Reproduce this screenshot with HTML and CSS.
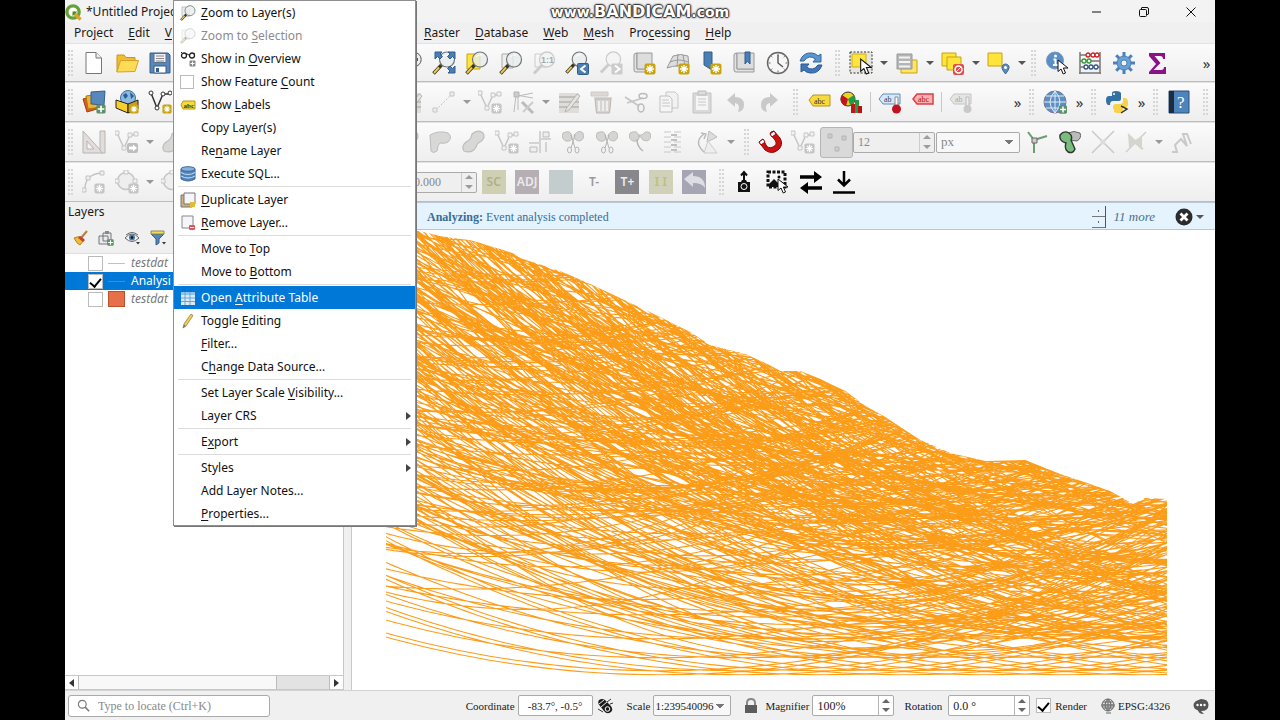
FILE: index.html
```html
<!DOCTYPE html>
<html lang="en">
<head>
<meta charset="utf-8">
<title>*Untitled Project — QGIS</title>
<link rel="stylesheet" href="styles.css">
</head>
<body>
<svg class="defs" aria-hidden="true">
  <defs>
    <symbol id="star" viewBox="0 0 12 12"><rect x=".5" y=".5" width="11" height="11" rx="2" fill="#c9a40c"/><path d="M6 2v8M2 6h8M3.2 3.2l5.6 5.6M8.8 3.2L3.2 8.8" stroke="#fff" stroke-width="1.3"/></symbol>
    <symbol id="gstar" viewBox="0 0 12 12"><rect x=".5" y=".5" width="11" height="11" rx="2" fill="#c4c4c4"/><path d="M6 2v8M2 6h8M3.2 3.2l5.6 5.6M8.8 3.2L3.2 8.8" stroke="#fff" stroke-width="1.3"/></symbol>
    <symbol id="plus" viewBox="0 0 12 12"><rect x=".5" y=".5" width="11" height="11" rx="2" fill="#5b9068"/><path d="M6 2v8M2 6h8" stroke="#fff" stroke-width="2"/></symbol>
    <symbol id="lens" viewBox="0 0 24 24"><path d="M1.500 22.500l8-8.500" stroke="#3d3520" stroke-width="3.500"/><path d="M2 22l5-5.500" stroke="#e5c95a" stroke-width="2"/><circle cx="15" cy="8.500" r="7.500" fill="#e7eced" fill-opacity=".8" stroke="#6f7678" stroke-width="1.200"/><path d="M11 6q2-3 6-2" stroke="#fff" fill="none"/></symbol>
    <symbol id="glens" viewBox="0 0 24 24"><path d="M2 22.500l8-8.500" stroke="#ccc" stroke-width="3"/><circle cx="15" cy="8.500" r="7.500" fill="#f4f4f4" stroke="#ccc" stroke-width="1.300"/></symbol>
    <symbol id="cursor" viewBox="0 0 12 16"><path d="M1 1v11.500l3-2.500 2.200 5 2.300-1L6.400 9H11z" fill="#fff" stroke="#111"/></symbol>

    <symbol id="new" viewBox="0 0 24 24"><path d="M4 1.500h10l5.500 5.500v15.500H4z" fill="#fff" stroke="#777"/><path d="M14 1.500v5.500h5.500" fill="#eee" stroke="#777"/></symbol>
    <symbol id="open" viewBox="0 0 24 24"><path d="M2 21V4h7l2 2.500h9V10" fill="#efbd2e" stroke="#c9951a"/><path d="M2 21l3.500-11.500h18L20 20.500z" fill="#ffda57" stroke="#d5a12b"/></symbol>
    <symbol id="save" viewBox="0 0 24 24"><path d="M2 2h18l2 2v18H2z" fill="#5b86b8" stroke="#345d8e"/><path d="M6 2.500h12v9H6z" fill="#f2f2f2" stroke="#58708c"/><path d="M8 5h8M8 7.500h8M8 10h8" stroke="#888"/><path d="M6 15h12v7H6z" fill="#fff" stroke="#345d8e"/><path d="M8 17h3v4H8z" fill="#345d8e"/></symbol>
    <symbol id="zout" viewBox="0 0 24 24"><circle cx="15" cy="8.500" r="7.200" fill="#eee" stroke="#555"/><path d="M11 8.500h8" stroke="#345d8e" stroke-width="3"/></symbol>
    <symbol id="zfull" viewBox="0 0 24 24"><use href="#lens" width="24" height="24"/><path d="M3 1h7l-2 2 2.500 2.500-2.500 2.500L5.500 5.500 3 8zM16 1h7v7l-2.500-2.500L18 8l-2.500-2.500L18 3zM23 22h-7l2-2-2.500-2.500L18 15l2.500 2.500L23 15z" fill="#4a7fb5" stroke="#315c89"/></symbol>
    <symbol id="zsel" viewBox="0 0 24 24"><path d="M2 3h13v15H2z" fill="#ffe43b" stroke="#c9a40c"/><use href="#lens" width="24" height="24"/></symbol>
    <symbol id="zlayer" viewBox="0 0 24 24"><path d="M3 3h11v14H3z" fill="#eee" stroke="#aaa"/><use href="#lens" width="24" height="24"/></symbol>
    <symbol id="zone" viewBox="0 0 24 24"><path d="M3 3h11v13H3z" fill="none" stroke="#ccc"/><use href="#glens" width="24" height="24"/><text x="9" y="12" font-size="9" font-weight="bold" fill="#aaa" font-family="Liberation Sans">1:1</text></symbol>
    <symbol id="zlast" viewBox="0 0 24 24"><use href="#lens" width="23" height="23"/><rect x="12.500" y="12.500" width="11" height="11" rx="1" fill="#4a7fb5" stroke="#315c89"/><path d="M20.500 14.500l-4.500 3.500 4.500 3.500" fill="none" stroke="#fff" stroke-width="2"/></symbol>
    <symbol id="znext" viewBox="0 0 24 24"><use href="#glens" width="23" height="23"/><rect x="12.500" y="12.500" width="11" height="11" rx="1" fill="#ccc"/><path d="M16 14.500l4.500 3.500-4.500 3.500" fill="none" stroke="#fff" stroke-width="2"/></symbol>
    <symbol id="newmap" viewBox="0 0 24 24"><path d="M2 4q0-2 3-2v16h16v3H4q-2 0-2-2z" fill="#e2e2e2" stroke="#999"/><path d="M5 2h15v16H5z" fill="#ddd" stroke="#999"/><use href="#star" x="12" y="12" width="12" height="12"/></symbol>
    <symbol id="map3d" viewBox="0 0 24 24"><path d="M1 17l6-12q8-3 15 0l1 11q-11-3-22 1z" fill="#ddd" stroke="#999"/><path d="M4 11q9-4 18 0M12 3l-1 13M17 4l2 12" stroke="#999" fill="none"/><use href="#star" x="12" y="12" width="12" height="12"/></symbol>
    <symbol id="mark" viewBox="0 0 24 24"><path d="M5 1h8v18l-8-5z" fill="#4a7fb5" stroke="#315c89"/><use href="#star" x="11" y="12" width="12" height="12"/></symbol>
    <symbol id="marks" viewBox="0 0 24 24"><path d="M2 4q0-2 3-2v16h17v3H4q-2 0-2-2z" fill="#e2e2e2" stroke="#999"/><path d="M5 2h17v16H5z" fill="#ddd" stroke="#999"/><path d="M13 1h5v12l-2.500-3L13 13z" fill="#4a7fb5" stroke="#315c89"/></symbol>
    <symbol id="clock" viewBox="0 0 24 24"><circle cx="12" cy="12" r="10.500" fill="#f6f6f6" stroke="#666" stroke-width="1.400"/><path d="M12 4v8l5 4" fill="none" stroke="#555" stroke-width="1.400"/><path d="M12 2.500v2M12 19.500v2M2.500 12h2M19.500 12h2M5.300 5.300l1 1M18.700 5.300l-1 1M5.300 18.700l1-1M18.700 18.700l-1-1" stroke="#666"/></symbol>
    <symbol id="refresh" viewBox="0 0 24 24"><path d="M1 10Q4 1 13 2q4 .5 6 3l3-2v8h-8l2.500-3Q10 3 5 10z" fill="#5b96d2" stroke="#3267a2"/><path d="M23 14q-3 9-12 8-4-.5-6-3l-3 2v-8h8l-2.500 3Q14 21 19 14z" fill="#3e78bb" stroke="#2a5a93"/></symbol>
    <symbol id="select" viewBox="0 0 24 24"><path d="M1 1h22v21H1z" fill="#e6e6e0" stroke="#333" stroke-dasharray="2 1.500"/><path d="M3 3h14v13H3z" fill="#ffe43b" stroke="#cdb01e"/><use href="#cursor" x="10" y="7" width="14" height="17"/></symbol>
    <symbol id="selform" viewBox="0 0 24 24"><path d="M6 9h16v13H6z" fill="#ffe566" stroke="#c9a40c"/><path d="M2 3h15v15H2z" fill="#b5b5b5" stroke="#999"/><path d="M4 5.500h11v2H4zM4 10h11v2H4zM4 14.500h11v2H4z" fill="#f4f4f4"/></symbol>
    <symbol id="desel" viewBox="0 0 24 24"><path d="M1 2h14v13H1z" fill="#ffe43b" stroke="#c9a40c"/><path d="M6 6h14v13H6z" fill="#ffe43b" stroke="#c9a40c"/><rect x="12" y="13" width="11" height="11" rx="2" fill="#dd4d4d"/><circle cx="17.500" cy="18.500" r="3.500" fill="none" stroke="#fff" stroke-width="1.500"/><path d="M15 21l5-5" stroke="#fff"/></symbol>
    <symbol id="selloc" viewBox="0 0 24 24"><path d="M1 2h14v13H1z" fill="#ffe43b" stroke="#c9a40c"/><path d="M18.500 23q-6-7-2-9.500 2-1 4 0 4 2.500-2 9.500z" fill="#5b8ac0" stroke="#416b9b"/><circle cx="18.500" cy="16.500" r="1.500" fill="#fff"/></symbol>
    <symbol id="ident" viewBox="0 0 24 24"><circle cx="10" cy="9.500" r="8.500" fill="#5b8ec6" stroke="#7897b9"/><path d="M10.500 8v6M8.500 8.500h2M8 14h5" stroke="#fff" stroke-width="2"/><circle cx="10.500" cy="5" r="1.500" fill="#fff"/><use href="#cursor" x="11" y="8" width="14" height="16"/></symbol>
    <symbol id="abacus" viewBox="0 0 24 24"><path d="M2 1v22M22 1v22M1 22h22M2 4h20M2 10h20M2 16h20" stroke="#777" stroke-width="1.500"/><g fill="#fff" stroke-width="1.300"><g stroke="#c22"><circle cx="10" cy="4" r="2"/><circle cx="15" cy="4" r="2"/><circle cx="19" cy="4" r="2"/></g><g stroke="#393"><circle cx="6" cy="10" r="2"/><circle cx="11" cy="10" r="2"/></g><g stroke="#358"><circle cx="8" cy="16" r="2"/><circle cx="13" cy="16" r="2"/><circle cx="18" cy="16" r="2"/></g></g></symbol>
    <symbol id="gear" viewBox="0 0 24 24"><path d="M12 1v22M1 12h22M4.200 4.200l15.600 15.600M19.800 4.200L4.200 19.800" stroke="#4b80b8" stroke-width="3"/><circle cx="12" cy="12" r="7" fill="#69a0d6" stroke="#4b80b8"/><circle cx="12" cy="12" r="3" fill="#f4f4f4" stroke="#4b80b8"/></symbol>
    <symbol id="sigma" viewBox="0 0 24 24"><path d="M4 2h16v6h-2q0-3-3-3H9.500l6 7-7 7H16q3 0 3-3h2v7H4v-2l7-8-7-8z" fill="#8b1186"/></symbol>

    <symbol id="dsm" viewBox="0 0 24 24"><path d="M1 9l13-4 4 13-13 4z" fill="#dd5b23" stroke="#a43c11"/><path d="M4 6l13-2 2 13-13 2z" fill="#efb32e" stroke="#a97a12"/><path d="M9 2l14-1-1 14-13-1z" fill="#5687bd" stroke="#365f8e"/><use href="#plus" x="14" y="14" width="10" height="10"/></symbol>
    <symbol id="gpkg" viewBox="0 0 24 24"><circle cx="13" cy="8" r="7.500" fill="#8bbbe0" stroke="#456f96"/><path d="M8 5l3-2 2 3-3 3zM15 2l4 4-3 3z" fill="#2d5c8f"/><path d="M1 10l12 4v9L1 18z" fill="#f7cf2c" stroke="#222"/><path d="M13 14l10-4v9l-10 4z" fill="#c99f16" stroke="#222"/><use href="#star" x="14" y="14" width="10" height="10"/></symbol>
    <symbol id="vee" viewBox="0 0 24 24"><path d="M3 3l6 15 6-14h7" stroke="#333" stroke-width="1.500" fill="none"/><g fill="#fff" stroke="#333"><circle cx="3" cy="3" r="2"/><circle cx="9" cy="18" r="2"/><circle cx="15" cy="4" r="2"/><circle cx="22" cy="3" r="2"/></g><use href="#star" x="14" y="14" width="10" height="10"/></symbol>
    <symbol id="gvee" viewBox="0 0 24 24"><path d="M2 3l7 15 6-13h7" stroke="#c6c6c6" fill="none" stroke-width="1.500"/><g fill="#f2f2f2" stroke="#c6c6c6"><path d="M0 1h4v4H0zM7 16h4v4H7zM13 3h4v4h-4zM19 2h4v4h-4z"/></g><use href="#gstar" x="13" y="13" width="11" height="11"/></symbol>
    <symbol id="garrow" viewBox="0 0 24 24"><path d="M2 3l7 15 6-13h7" stroke="#c6c6c6" fill="none" stroke-width="1.500"/><g fill="#f2f2f2" stroke="#c6c6c6"><path d="M0 1h4v4H0zM7 16h4v4H7zM13 3h4v4h-4zM19 2h4v4h-4z"/></g><rect x="12" y="13" width="11" height="10" rx="2" fill="#bdbdbd"/><path d="M14 16.500h4v-2l4 3.500-4 3.500v-2h-4z" fill="#fff"/></symbol>
    <symbol id="gline" viewBox="0 0 24 24"><path d="M4 20L20 4" stroke="#c4c4c4" stroke-dasharray="2 1.500"/><path d="M1 18h4v4H1zM18 2h4v4h-4z" fill="#eee" stroke="#c4c4c4"/></symbol>
    <symbol id="gvert" viewBox="0 0 24 24"><path d="M3 22L5 5l17 3M7 20V6l15-3" stroke="#bbb" fill="none"/><path d="M3 2h5v5H3z" fill="#ccc" stroke="#b5b5b5"/><path d="M11 12l11 11" stroke="#bbb" stroke-width="3"/><path d="M22 12L12 22" stroke="#ccc" stroke-width="2"/></symbol>
    <symbol id="gtable" viewBox="0 0 24 24"><path d="M2 3h20v20H2z" fill="#dfdcd9"/><path d="M2 7h20M2 12h20M2 17h20" stroke="#b8b5b2" stroke-width="1.500"/><path d="M9 19L20 4l3 2-11 14-4 2z" fill="#e5e5e2" stroke="#b5b5b5"/></symbol>
    <symbol id="gtrash" viewBox="0 0 24 24"><path d="M1 2h17v4H1z" fill="#ddd8d4" stroke="#ccc"/><path d="M5 9h16l-1.500 14h-13zM4 8h18" fill="#d8d4d1" stroke="#bbb5b0"/><path d="M9 11v10M13 11v10M17 11v10" stroke="#eee" stroke-width="2"/></symbol>
    <symbol id="gcut" viewBox="0 0 24 24"><path d="M1 7l14 9M3 13l16-5" stroke="#c4c4c4" stroke-width="1.500"/><ellipse cx="19" cy="6" rx="4" ry="2.500" fill="none" stroke="#bbb" stroke-width="1.500"/><ellipse cx="17" cy="18" rx="3" ry="4" fill="none" stroke="#bbb" stroke-width="1.500"/></symbol>
    <symbol id="gcopy" viewBox="0 0 24 24"><path d="M9 2h9l3 3v13H9z" fill="#f2f2f2" stroke="#c8c8c8"/><path d="M3 6h9l3 3v13H3z" fill="#f6f6f6" stroke="#c0c0c0"/><path d="M5 10h7M5 13h8M5 16h8" stroke="#c8c8c8"/></symbol>
    <symbol id="gpaste" viewBox="0 0 24 24"><path d="M3 3h18v20H3z" fill="#d9d9dc" stroke="#c4c4c4"/><path d="M6 6h12v14H6z" fill="#f5f5f5"/><path d="M8 1h8v4H8z" fill="#ddd" stroke="#bbb"/><path d="M8 9h8M8 12h8M8 15h8" stroke="#c8c8c8"/></symbol>
    <symbol id="gundo" viewBox="0 0 24 24"><path d="M3 10l8-7v4q9 0 9 8 0 6-6 7 3-8-3-9v4z" fill="#c9c9c9"/></symbol>
    <symbol id="gredo" viewBox="0 0 24 24"><path d="M21 10l-8-7v4q-9 0-9 8 0 6 6 7-3-8 3-9v4z" fill="#c9c9c9"/></symbol>
    <symbol id="lab" viewBox="0 0 24 24"><path d="M2 10l4-5h17v11H6z" fill="#f8da3a" stroke="#b7951c"/><text x="7" y="13.500" font-size="8" fill="#333" font-family="Liberation Serif">abc</text></symbol>
    <symbol id="diag" viewBox="0 0 24 24"><circle cx="8" cy="9" r="7" fill="#e9d325" stroke="#333"/><path d="M8 9L2 5a7 7 0 0 0 4 11z" fill="#c3161c"/><path d="M8 9l6-4a7 7 0 0 1-4 10z" fill="#249c43"/><path d="M11 14h4v9h-4z" fill="#c3161c"/><path d="M15 10h4v13h-4z" fill="#249c43"/><path d="M18 16h4v7h-4z" fill="#b11"/></symbol>
    <symbol id="labpin" viewBox="0 0 24 24"><path d="M1 9l4-5h17v10H5z" fill="#d5e8f8" stroke="#5c8dbc"/><text x="6" y="12" font-size="8" fill="#345" font-family="Liberation Serif">ab</text><path d="M17 7h3v9h-3z" fill="#fff" stroke="#888"/><circle cx="18.500" cy="19" r="4.500" fill="#c1121f"/></symbol>
    <symbol id="labred" viewBox="0 0 24 24"><path d="M2 9l4-5h16v10H6z" fill="#f8b0b0" stroke="#dc3d45" stroke-width="1.500"/><text x="7" y="12" font-size="8" fill="#a11" font-family="Liberation Serif">abc</text></symbol>
    <symbol id="labgray" viewBox="0 0 24 24"><path d="M1 9l4-5h17v10H5z" fill="#e5e5e5" stroke="#c4c4c4"/><text x="6" y="12" font-size="8" fill="#aaa" font-family="Liberation Serif">ab</text><path d="M17 7h3v9h-3z" fill="#eee" stroke="#bbb"/><circle cx="18.500" cy="19" r="4" fill="#c9c9c9"/></symbol>
    <symbol id="globe" viewBox="0 0 24 24"><circle cx="12" cy="12" r="11" fill="#5d8fc4" stroke="#778"/><path d="M1 12h22M12 1v22M3 6h18M3 18h18M12 1Q2 12 12 23M12 1q10 11 0 22" stroke="#e3eefa" fill="none"/><use href="#plus" x="15" y="15" width="10" height="9"/></symbol>
    <symbol id="py" viewBox="0 0 24 24"><path d="M7 6V3q0-2 4-2t5 2v6q0 2-2 2H8q-3 0-3 4H3q-2-1-2-5t3-4z" fill="#3570a5"/><path d="M9 19v2q0 2 4 2t5-2v-3h2q3 0 3-5t-3-5h-2v3q0 3-3 3h-4q-3 0-3 3v2z" fill="#f8d24a"/><circle cx="9" cy="4" r="1" fill="#fff"/><path d="M16 16l6 3-6 4" stroke="#333" fill="none" stroke-width="1.500"/></symbol>
    <symbol id="help" viewBox="0 0 24 24"><path d="M2 1h20v22H2z" fill="#4e84bd" stroke="#2c4f78"/><path d="M2 1h5v22H2z" fill="#1d2d3f"/><text x="10" y="18" font-size="17" fill="#fff" font-family="Liberation Serif">?</text></symbol>

    <symbol id="gtri" viewBox="0 0 24 24"><path d="M1 1l20 22H1z" fill="#e2dddc" stroke="#b9b4b3"/><path d="M5 11l7 8H5z" fill="#f3f3f3" stroke="#b9b4b3"/><path d="M18 1h5v22h-3l-2-3z" fill="#e2dddc" stroke="#b9b4b3"/></symbol>
    <symbol id="gfoot" viewBox="0 0 24 24"><path d="M2 5q9-5 18-2 5 4 0 9-3 2-8 1-2 1-3 8-4 3-6 0z" fill="#d8d8d6" stroke="#bdbdbb"/></symbol>
    <symbol id="gpoly" viewBox="0 0 24 24"><path d="M11 4q6-5 11-1 3 5-3 9-3 1-4 5-4 7-12 4-3-5 2-9 5-2 6-8z" fill="#d8d8d6" stroke="#bdbdbb" stroke-width="1.200"/></symbol>
    <symbol id="gsplit" viewBox="0 0 24 24"><path d="M12 1v22M1 13h10M13 9h10M18 12v10" stroke="#c8c8c8" stroke-width="1.500"/><path d="M15 2h6v5h-6zM2 17h7v5H2z" fill="#eee" stroke="#bbb"/></symbol>
    <symbol id="gsciss" viewBox="0 0 24 24"><path d="M2 3q8-4 9 4 0 5-6 4-5-2-3-8zM13 5q5-6 9-2 2 6-3 8-6 0-6-6z" fill="#d5d5d3" stroke="#bdbdbb"/><path d="M14 5l-4 13M10 5l4 13" stroke="#b4b4b4"/><ellipse cx="8.500" cy="20" rx="2" ry="3" fill="none" stroke="#b4b4b4"/><ellipse cx="16" cy="20" rx="2" ry="3" fill="none" stroke="#b4b4b4"/></symbol>
    <symbol id="gmergef" viewBox="0 0 24 24"><path d="M2 3q8-4 9 4 0 5-6 4-5-2-3-8zM11 5h3q4-5 8-2 2 6-3 8-5 0-6-4h-2z" fill="#d5d5d3" stroke="#bdbdbb"/><path d="M9 9q0 8 6 12" fill="none" stroke="#b4b4b4" stroke-width="1.500"/></symbol>
    <symbol id="gmerge" viewBox="0 0 24 24"><path d="M2 2h20M2 7h20M2 12h20M2 17h20M2 22h20" stroke="#c8c8c8" stroke-dasharray="7 3"/><path d="M9 5h6M9 10h6M9 15h6M9 20h6" stroke="#c0c0c0" stroke-width="2"/></symbol>
    <symbol id="grot" viewBox="0 0 24 24"><path d="M9 22Q-2 12 9 4M6 3l5 1-2 5" stroke="#bbb" fill="none" stroke-width="1.500"/><path d="M12 12L22 7l-8-6z" fill="#ddd" stroke="#bbb"/><path d="M13 11l9 12H9z" fill="#eee" stroke="#ccc"/></symbol>
    <symbol id="magnet" viewBox="0 0 24 24"><path d="M13 2l-1 2 5 6q3 5-2 7t-7-2L5 9 1 12l6 8q7 5 13 0t2-12l-6-7z" fill="#cc1111" stroke="#8e0909"/><path d="M1 12l4-3 2 3-4 3zM12 4l4-3 2 3-4 3z" fill="#fff" stroke="#8e0909"/></symbol>
    <symbol id="dots" viewBox="0 0 24 24"><path d="M3 4h4v4H3zM17 6h4v4h-4zM10 17h4v4h-4z" fill="#ccc" stroke="#b5b5b5"/></symbol>
    <symbol id="topo" viewBox="0 0 24 24"><path d="M3 2l6 8 13-4M9 10v13" stroke="#6e9b72" stroke-width="2" fill="none"/><path d="M7 8h5v5H7z" fill="#ccc" stroke="#666"/></symbol>
    <symbol id="avoid" viewBox="0 0 24 24"><path d="M10 3q6-3 12 0 2 5-3 8l-8-1z" fill="#bbb" stroke="#666"/><path d="M2 5q4-5 9-2 4 3 2 7l4 9q-2 5-7 3-4-3-2-9-7-2-6-8z" fill="#78bd7b" stroke="#333" stroke-width="1.400"/></symbol>
    <symbol id="gcross" viewBox="0 0 24 24"><path d="M1 1l22 22M23 1L1 23" stroke="#c9c9c9" stroke-width="1.500"/><circle cx="12" cy="12" r="2.500" fill="#ddd"/></symbol>
    <symbol id="gtrace" viewBox="0 0 24 24"><path d="M2 22L22 2M4 4l15 15" stroke="#cfcfcf" stroke-width="1.500"/><path d="M4 4l7 6 7-4v14l-7-6-6 4z" fill="#d6d5cc"/></symbol>
    <symbol id="gzig" viewBox="0 0 24 24"><path d="M2 22h5L5 15l6-6 6 7-4-12h4l4 10" fill="none" stroke="#c9c9c9" stroke-width="2"/></symbol>

    <symbol id="gcurve" viewBox="0 0 24 24"><path d="M3 21Q2 4 20 3" stroke="#c4c4c4" fill="none" stroke-width="1.500"/><path d="M0 18h4v4H0zM4 6h4v4H4zM18 1h4v4h-4z" fill="#eee" stroke="#c4c4c4"/><use href="#gstar" x="12" y="13" width="11" height="11"/></symbol>
    <symbol id="gcirc" viewBox="0 0 24 24"><circle cx="11" cy="11" r="8.500" fill="#eee" stroke="#c4c4c4" stroke-width="1.500"/><path d="M9 0h4v4H9zM0 9h4v4H0zM18 9h4v4h-4z" fill="#f3f3f3" stroke="#c4c4c4"/><use href="#gstar" x="13" y="13" width="11" height="11"/></symbol>
    <symbol id="undoblock" viewBox="0 0 24 24"><path d="M2 9l9-7v4q12 0 12 12-3-5-12-5v4z" fill="#dcdde5"/></symbol>
    <symbol id="cam" viewBox="0 0 24 24"><path d="M12 10V3M9 5.500L12 2l3 3.500" stroke="#111" stroke-width="2" fill="none"/><path d="M6 12h3l1-2h4l1 2h3v10H6z" fill="#111"/><circle cx="12" cy="16.500" r="3" fill="#111" stroke="#fff"/></symbol>
    <symbol id="imgsel" viewBox="0 0 24 24"><path d="M3 2h17v15H3z" fill="none" stroke="#111" stroke-width="3" stroke-dasharray="3 1.500"/><path d="M4 14l5-5 4 4 3-2 4 4v2H4z" fill="#111"/><circle cx="14" cy="7" r="1.500"/><use href="#cursor" x="12" y="8" width="12" height="16"/></symbol>
    <symbol id="swap" viewBox="0 0 24 24"><path d="M1 7h15M8 18h15" stroke="#000" stroke-width="3.500"/><path d="M15 1l8 6-8 6zM9 12l-8 6 8 6z"/></symbol>
    <symbol id="down" viewBox="0 0 24 24"><path d="M12 1v14M6 9.500l6 6 6-6M1 22.500h22" stroke="#000" stroke-width="2.500" fill="none"/></symbol>

    <symbol id="specs" viewBox="0 0 16 16"><path d="M1 1L3 3h4l2 1 2-1h4" stroke="#222" fill="none"/><circle cx="4" cy="4.500" r="2.500" fill="#fff" stroke="#222" stroke-width="1.300"/><circle cx="12" cy="4.500" r="2.500" fill="#fff" stroke="#222" stroke-width="1.300"/><rect x="9.500" y="9.500" width="6" height="6" rx="1" fill="#888"/><path d="M12.500 10.500v4M10.500 12.500h4" stroke="#fff"/></symbol>
    <symbol id="db" viewBox="0 0 16 16"><path d="M1 3v10q7 4 14 0V3z" fill="#4f84bd" stroke="#3b6595"/><ellipse cx="8" cy="3" rx="7" ry="2.300" fill="#88b1dc" stroke="#3b6595"/><path d="M1 6.500q7 4 14 0M1 10q7 4 14 0" stroke="#c9dcf0" fill="none"/></symbol>
    <symbol id="dup" viewBox="0 0 16 16"><path d="M1 3h11v12H1z" fill="#c8b27a" stroke="#777"/><path d="M4 1h11v11H4z" fill="#f6f6fa" stroke="#777"/><path d="M10 10h5v5h-5z" fill="#e0bb35"/></symbol>
    <symbol id="rem" viewBox="0 0 16 16"><path d="M2 1h11v12H2z" fill="#f6f6fa" stroke="#888"/><rect x="9" y="10" width="6" height="5" rx="1" fill="#e05560"/><path d="M10 12.500h4" stroke="#fff"/></symbol>
    <symbol id="tab" viewBox="0 0 16 16"><path d="M1 2h14v13H1z" fill="#dceaf6"/><path d="M1 2h14v3H1z" fill="#8ec4ed"/><path d="M1 8h14M1 11.500h14M5 2v13M10 2v13" stroke="#6ba4d5"/></symbol>
    <symbol id="pencil" viewBox="0 0 16 16"><path d="M4 11L11 1l2 1.500-7 10.500-3 2z" fill="#f0cd56" stroke="#94803c" stroke-width=".8"/><path d="M3 15l1-3.500 1.800 1.500z" fill="#777"/></symbol>
    <symbol id="tag" viewBox="0 0 16 16"><path d="M1 8l2-4h12v8H3z" fill="#f8da3a" stroke="#b7951c"/><text x="3.500" y="10.500" font-size="7" font-weight="bold" fill="#443800" font-family="Liberation Serif">abc</text></symbol>
    <symbol id="q" viewBox="0 0 18 18"><circle cx="8.500" cy="8.500" r="6.500" fill="#fff" stroke="#66a336" stroke-width="3.500"/><path d="M9 9l7.500 7.500" stroke="#e7a129" stroke-width="3.500"/><path d="M8 8h5l-5 5z" fill="#4c8b2b"/></symbol>
    <symbol id="brush" viewBox="0 0 16 16"><path d="M15 1L9 8" stroke="#b5823c" stroke-width="2"/><path d="M2 8q4-2 8-1l2 3-4 5q-3-1-6-7z" fill="#f0bd35" stroke="#a8872f"/><path d="M8 6l5 4-2 2-5-4z" fill="#c9403b"/></symbol>
    <symbol id="group" viewBox="0 0 16 16"><path d="M1 6h9v8H1zM5 3h8v8H5z" fill="#e6e9ed" stroke="#777"/><path d="M7 1h4v3H7z" fill="#888"/><use href="#plus" x="9" y="9" width="7" height="7"/></symbol>
    <symbol id="eye" viewBox="0 0 16 16"><path d="M1 8q7-8 14 0-7 7-14 0z" fill="#eef3f8" stroke="#666"/><circle cx="8" cy="7.500" r="3" fill="#4f79a8"/><circle cx="8" cy="7.500" r="1.200" fill="#111"/><path d="M2 5q6-5 12 0" stroke="#666" fill="none"/><path d="M12 12h4l-2 2.500z" fill="#333"/></symbol>
    <symbol id="filt" viewBox="0 0 16 16"><path d="M1 4l5 5v6l3-2V9l5-5z" fill="#5586bb" stroke="#365f8e"/><path d="M1 1h13v3H1z" fill="#f3dc55" stroke="#8a8a52"/><path d="M12 12h4l-2 2.500z" fill="#333"/></symbol>
    <symbol id="find" viewBox="0 0 16 16"><circle cx="6.500" cy="6.500" r="4.800" fill="none" stroke="#777" stroke-width="1.400"/><path d="M10 10l5 5" stroke="#777" stroke-width="1.800"/></symbol>
    <symbol id="bug" viewBox="0 0 16 16"><path d="M2 2q3-2 6 0l5 5q4 4 1 7-4 3-7-1L3 8Q0 5 2 2z" fill="#1c1c1c"/><path d="M2 6l5-4M4 9l6-5" stroke="#eee"/><circle cx="10.500" cy="11" r="2.300" fill="#1c1c1c" stroke="#fff"/><path d="M10 4l4-3M13 6l3-1M1 11l5 3" stroke="#333"/></symbol>
    <symbol id="lock" viewBox="0 0 16 16"><path d="M4 8V5q0-4 4-4t4 4v3" fill="none" stroke="#888" stroke-width="2"/><rect x="2" y="7" width="12" height="8" fill="#5c5c5c"/></symbol>
    <symbol id="sglobe" viewBox="0 0 16 16"><circle cx="8" cy="7" r="6" fill="#ddd" stroke="#666"/><path d="M2 7h12M8 1v12M3 4h10M3 10h10M8 1Q2 7 8 13M8 1q6 6 0 12M6 15h5" stroke="#666" fill="none"/><path d="M1 6h14v3H1z" fill="#777" opacity=".5"/></symbol>
    <symbol id="bubble" viewBox="0 0 16 16"><path d="M8 1q7.500 0 7.500 6T8 13q2 2 3 3-5 0-6-3.500Q.5 11 .5 7T8 1z" fill="#555"/><circle cx="4.500" cy="7" r="1.200" fill="#fff"/><circle cx="8" cy="7" r="1.200" fill="#fff"/><circle cx="11.500" cy="7" r="1.200" fill="#fff"/></symbol>
  </defs>
</svg>

<div class="app">
  <header class="titlebar">
    <svg class="logo"><use href="#q"/></svg>
    <span class="title">*Untitled Project</span>
    <span class="watermark"><small>www.</small>BANDICAM<small>.com</small></span>
    <span class="winbtns">
      <button aria-label="Minimize"><svg viewBox="0 0 12 12"><path d="M1 6h9" stroke="#111"/></svg></button>
      <button aria-label="Restore"><svg viewBox="0 0 12 12"><path d="M3.500 3V2q0-.5.500-.5h5q1.500 0 1.500 1.500v5q0 .5-1.500.5" fill="none" stroke="#111"/><rect x="1.500" y="3.500" width="7" height="7" rx="1" fill="none" stroke="#111"/></svg></button>
      <button aria-label="Close"><svg viewBox="0 0 12 12"><path d="M1.500 1.500l9 9M10.500 1.500l-9 9" stroke="#111"/></svg></button>
    </span>
  </header>

  <nav class="menubar">
    <div class="menus lead"><button>Pro<u>j</u>ect</button><button><u>E</u>dit</button><button><u>V</u></button></div>
    <div class="menus"><button><u>R</u>aster</button><button><u>D</u>atabase</button><button><u>W</u>eb</button><button><u>M</u>esh</button><button>Pro<u>c</u>essing</button><button><u>H</u>elp</button></div>
  </nav>

  <div class="toolbar">
    <div class="lead"><i class="grip"></i><button class="tb"><svg><use href="#new"/></svg></button><button class="tb"><svg><use href="#open"/></svg></button><button class="tb"><svg><use href="#save"/></svg></button><button class="tb last"><svg><use href="#zout"/></svg></button></div>
    <div class="run n12"><button class="tb"><svg><use href="#zfull"/></svg></button><button class="tb"><svg><use href="#zsel"/></svg></button><button class="tb"><svg><use href="#zlayer"/></svg></button><button class="tb"><svg><use href="#zone"/></svg></button><button class="tb"><svg><use href="#zlast"/></svg></button><button class="tb"><svg><use href="#znext"/></svg></button><button class="tb"><svg><use href="#newmap"/></svg></button><button class="tb"><svg><use href="#map3d"/></svg></button><button class="tb"><svg><use href="#mark"/></svg></button><button class="tb"><svg><use href="#marks"/></svg></button><button class="tb"><svg><use href="#clock"/></svg></button><button class="tb"><svg><use href="#refresh"/></svg></button></div>
    <i class="grip gap"></i>
    <button class="tb"><svg><use href="#select"/></svg></button><button class="drop"></button>
    <button class="tb"><svg><use href="#selform"/></svg></button><button class="drop"></button>
    <button class="tb"><svg><use href="#desel"/></svg></button><button class="drop"></button>
    <button class="tb"><svg><use href="#selloc"/></svg></button><button class="drop"></button>
    <i class="grip"></i>
    <div class="run n4"><button class="tb"><svg><use href="#ident"/></svg></button><button class="tb"><svg><use href="#abacus"/></svg></button><button class="tb"><svg><use href="#gear"/></svg></button><button class="tb"><svg><use href="#sigma"/></svg></button></div>
    <button class="more end">»</button>
  </div>

  <div class="toolbar tall">
    <div class="lead"><i class="grip"></i><button class="tb"><svg><use href="#dsm"/></svg></button><button class="tb"><svg><use href="#gpkg"/></svg></button><button class="tb"><svg><use href="#vee"/></svg></button><button class="tb last"><svg><use href="#gtable"/></svg></button></div>
    <button class="tb"><svg><use href="#gline"/></svg></button><button class="drop dim"></button>
    <button class="tb"><svg><use href="#gvee"/></svg></button>
    <button class="tb"><svg><use href="#gvert"/></svg></button><button class="drop dim"></button>
    <div class="run n7"><button class="tb"><svg><use href="#gtable"/></svg></button><button class="tb"><svg><use href="#gtrash"/></svg></button><button class="tb"><svg><use href="#gcut"/></svg></button><button class="tb"><svg><use href="#gcopy"/></svg></button><button class="tb"><svg><use href="#gpaste"/></svg></button><button class="tb"><svg><use href="#gundo"/></svg></button><button class="tb"><svg><use href="#gredo"/></svg></button></div>
    <i class="grip gap"></i>
    <button class="tb"><svg><use href="#lab"/></svg></button><button class="tb"><svg><use href="#diag"/></svg></button><i class="rule"></i>
    <button class="tb"><svg><use href="#labpin"/></svg></button><button class="tb"><svg><use href="#labred"/></svg></button><i class="rule"></i>
    <button class="tb"><svg><use href="#labgray"/></svg></button>
    <button class="more end">»</button><i class="grip"></i>
    <button class="tb"><svg><use href="#globe"/></svg></button><button class="more">»</button><i class="grip"></i>
    <button class="tb"><svg><use href="#py"/></svg></button><button class="more">»</button><i class="grip"></i>
    <button class="tb"><svg><use href="#help"/></svg></button><i class="grip tail"></i>
  </div>

  <div class="toolbar tall">
    <div class="lead short"><i class="grip"></i><button class="tb"><svg><use href="#gtri"/></svg></button><button class="tb"><svg><use href="#garrow"/></svg></button><button class="drop dim"></button><button class="tb"><svg><use href="#gpoly"/></svg></button><button class="tb last"><svg><use href="#gpoly"/></svg></button></div>
    <div class="run n9"><button class="tb"><svg><use href="#gfoot"/></svg></button><button class="tb"><svg><use href="#gpoly"/></svg></button><button class="tb"><svg><use href="#gvee"/></svg></button><button class="tb"><svg><use href="#gsplit"/></svg></button><button class="tb"><svg><use href="#gsciss"/></svg></button><button class="tb"><svg><use href="#gsciss"/></svg></button><button class="tb"><svg><use href="#gmergef"/></svg></button><button class="tb"><svg><use href="#gmerge"/></svg></button><button class="tb"><svg><use href="#grot"/></svg></button></div>
    <button class="drop dim"></button><i class="grip gap"></i>
    <button class="tb"><svg><use href="#magnet"/></svg></button><button class="tb"><svg><use href="#gvee"/></svg></button>
    <button class="tb pressed"><svg><use href="#dots"/></svg></button>
    <span class="spin off"><input aria-label="Tolerance" value="12" disabled><span class="steps"><button disabled></button><button disabled></button></span></span>
    <select class="unit" aria-label="Units" disabled><option>px</option></select>
    <button class="tb"><svg><use href="#topo"/></svg></button><button class="tb"><svg><use href="#avoid"/></svg></button><button class="tb"><svg><use href="#gcross"/></svg></button><button class="tb"><svg><use href="#gtrace"/></svg></button><button class="drop dim"></button><button class="tb"><svg><use href="#gzig"/></svg></button>
  </div>

  <div class="toolbar tall">
    <div class="lead digit"><i class="grip"></i><button class="tb"><svg><use href="#gcurve"/></svg></button><button class="tb"><svg><use href="#gcirc"/></svg></button><button class="drop dim"></button><button class="tb"><svg><use href="#gcirc"/></svg></button>
      <span class="spin off last"><input aria-label="Angle" value="0.000" disabled><span class="steps"><button disabled></button><button disabled></button></span></span></div>
    <div class="run n7"><button class="tb"><b class="sq sc">SC</b></button><button class="tb"><b class="sq adj">ADJ</b></button><button class="tb"><b class="sq blank"></b></button><button class="tb"><b class="sq tm">T-</b></button><button class="tb"><b class="sq tp">T+</b></button><button class="tb"><b class="sq bars">I I</b></button><button class="tb"><b class="sq back"><svg><use href="#undoblock"/></svg></b></button></div>
    <i class="grip wide"></i>
    <div class="run n4"><button class="tb"><svg><use href="#cam"/></svg></button><button class="tb"><svg><use href="#imgsel"/></svg></button><button class="tb"><svg><use href="#swap"/></svg></button><button class="tb"><svg><use href="#down"/></svg></button></div>
  </div>

  <main class="work">
    <section class="layers">
      <h2>Layers</h2>
      <div class="ltools"><button><svg><use href="#brush"/></svg></button><button><svg><use href="#group"/></svg></button><button><svg><use href="#eye"/></svg></button><button><svg><use href="#filt"/></svg></button></div>
      <ul class="tree">
        <li><label><input type="checkbox"><i class="line tan"></i><em>testdat</em></label></li>
        <li class="sel"><label><input type="checkbox" checked><i class="line teal"></i>Analysi</label></li>
        <li><label><input type="checkbox"><i class="fill"></i><em>testdat</em></label></li>
      </ul>
      <div class="hscroll"><button class="left" aria-label="Scroll left"></button><span class="track"></span><span class="thumb"></span><button class="right" aria-label="Scroll right"></button></div>
    </section>
    <section class="canvas">
      <div class="message"><span><b>Analyzing:</b> Event analysis completed</span><span class="ministeps"><i></i><i></i></span><a href="#more">11 more</a>
        <button aria-label="Close message"><svg viewBox="0 0 18 18"><circle cx="9" cy="9" r="8.500" fill="#2c2c2c"/><path d="M5.500 5.500l7 7M12.500 5.500l-7 7" stroke="#fff" stroke-width="2.800"/></svg></button><button class="drop"></button></div>
      <svg class="map" viewBox="351 230 864 460">
        <clipPath id="extent"><path d="M385 222L415 230L440 236L470 240L500 249L512 253L520 258L560 271L590 284L620 298L660 317L690 332L710 345L745 354L765 363L780 371L800 371L820 379L830 384L845 391L865 406L885 417L900 427L920 440L950 453L985 461L1025 460L1060 474L1090 484L1110 491L1133 504L1145 498L1167 499V676H385z"/></clipPath>
        <path id="curves" clip-path="url(#extent)"/>
      </svg>
    </section>
  </main>

  <footer class="status">
    <label class="locate"><svg><use href="#find"/></svg><input placeholder="Type to locate (Ctrl+K)" aria-label="Type to locate"></label>
    <label class="field coord">Coordinate<input value="-83.7°, -0.5°"></label>
    <button class="ic"><svg><use href="#bug"/></svg></button>
    <label class="field scale">Scale<select><option>1:239540096</option></select></label>
    <button class="ic lock"><svg><use href="#lock"/></svg></button>
    <label class="field" for="mag">Magnifier</label><span class="spin"><input id="mag" value="100%"><span class="steps"><button></button><button></button></span></span>
    <label class="field rot" for="rot">Rotation</label><span class="spin"><input id="rot" value="0.0 °"><span class="steps"><button></button><button></button></span></span>
    <label class="field render"><input type="checkbox" checked>Render</label>
    <button class="epsg"><svg><use href="#sglobe"/></svg>EPSG:4326</button>
    <button class="ic chat"><svg><use href="#bubble"/></svg></button>
  </footer>

  <div class="context" role="menu">
    <button><svg><use href="#zlayer"/></svg><span><u>Z</u>oom to Layer(s)</span></button>
    <button disabled><svg class="faint"><use href="#zlayer"/></svg><span>Zoom to <u>S</u>election</span></button>
    <button><svg><use href="#specs"/></svg><span>Show in <u>O</u>verview</span></button>
    <label><input type="checkbox"><span>Show Feature <u>C</u>ount</span></label>
    <button><svg><use href="#tag"/></svg><span>Show <u>L</u>abels</span></button>
    <button><span>Copy Layer(s)</span></button>
    <button><span>Re<u>n</u>ame Layer</span></button>
    <button><svg><use href="#db"/></svg><span>Execute SQL...</span></button>
    <hr>
    <button><svg><use href="#dup"/></svg><span><u>D</u>uplicate Layer</span></button>
    <button><svg><use href="#rem"/></svg><span><u>R</u>emove Layer...</span></button>
    <hr>
    <button><span>Move to <u>T</u>op</span></button>
    <button><span>Move to <u>B</u>ottom</span></button>
    <hr>
    <button class="hot"><svg><use href="#tab"/></svg><span>Open <u>A</u>ttribute Table</span></button>
    <button><svg><use href="#pencil"/></svg><span>Toggle <u>E</u>diting</span></button>
    <button><span><u>F</u>ilter...</span></button>
    <button><span>C<u>h</u>ange Data Source...</span></button>
    <hr>
    <button><span>Set Layer Scale <u>V</u>isibility...</span></button>
    <button class="sub"><span>Layer CRS</span></button>
    <hr>
    <button class="sub"><span>E<u>x</u>port</span></button>
    <hr>
    <button class="sub"><span>Styles</span></button>
    <button><span>Add Layer Notes...</span></button>
    <button><span><u>P</u>roperties...</span></button>
  </div>
</div>
<script src="map.js"></script>
</body>
</html>
```
FILE: styles.css
```css
* { box-sizing: border-box; }
body {
  margin: 0;
  padding: 0 65px;
  min-height: 100vh;
  background: #000;
  font: 13px/18px "Noto Sans", sans-serif;
  color: #1a1a1a;
}
button, input, select { font: inherit; color: inherit; margin: 0; }
button { border: 0; padding: 0; background: none; flex: none; }
svg { display: block; }
u { text-underline-offset: 2px; }
.defs { position: absolute; width: 0; height: 0; }
.app {
  position: relative;
  display: flex;
  flex-direction: column;
  height: 100vh;
  overflow: hidden;
  background: #f0f0f0;
}

/* title and menus */
.titlebar { display: grid; grid-template-columns: 1fr auto 1fr; align-items: center; height: 22px; padding-top: 2px; background: #f3f3f3; font-size: 12px; }
.titlebar .logo { width: 17px; height: 17px; grid-area: 1 / 1; }
.titlebar .title { grid-area: 1 / 1; margin-left: 21px; white-space: nowrap; }
.watermark {
  font: bold 16px/20px "DejaVu Sans", sans-serif;
  color: #fff;
  text-shadow: 1px 0 1px #333, -1px 0 1px #333, 0 1px 1px #333, 0 -1px 1px #333, 0 0 3px #333;
}
.watermark small { font-size: 14px; }
.winbtns { display: flex; justify-content: flex-end; padding-right: 1px; }
.winbtns button { width: 47px; display: grid; place-items: center; }
.winbtns svg { width: 12px; height: 12px; }
.menubar { display: flex; height: 21px; background: #f0f0f0; font-size: 12px; }
.menus { display: flex; gap: 15px; align-items: center; }
.menus.lead { width: 359px; padding-left: 9px; flex: none; }

/* toolbars */
.toolbar {
  display: flex;
  align-items: center;
  flex: none;
  height: 39px;
  border-top: 1px solid #e2e2e2;
  border-bottom: 1px solid #bdbdbd;
  background: linear-gradient(#fbfbfb, #eeeeee);
}
.toolbar.tall { height: 40px; }
.toolbar .lead { display: flex; align-items: center; width: 362px; flex: none; }
.toolbar .lead.short { width: 358px; }
.toolbar .lead.digit { width: 412px; }
.lead .last { margin-left: auto; }
.digit .spin { width: 68px; }
.tb { width: 33px; height: 34px; display: grid; place-items: center; }
.tb svg { width: 24px; height: 24px; }
.run { display: grid; flex: none; grid-auto-flow: column; grid-auto-columns: 1fr; justify-items: center; }
.n12 { width: 401px; }
.n7 { width: 234px; }
.n9 { width: 301px; }
.n4 { width: 134px; }
.grip {
  flex: none;
  width: 6px;
  height: 26px;
  margin: 0 3px;
  background: radial-gradient(circle at 1px 1px, #d6d6d6 1px, transparent 1px) 0 0 / 3px 4px;
}
.grip.gap { margin-left: 7px; }
.grip.wide { margin: 0 2px 0 8px; }
.grip.tail { margin: 0 6px 0 8px; }
.drop { width: 13px; height: 20px; display: grid; place-items: center; }
.drop::before { content: ""; border: 4px solid transparent; border-top-color: #555; border-bottom: 0; }
.drop.dim::before { border-top-color: #999; }
.more { width: 17px; font-size: 15px; line-height: 20px; color: #333; }
.end { margin-left: auto; }
.rule { width: 1px; height: 20px; margin: 0 2px; background: #c8c8c8; }
.pressed { border: 1px solid #b5b5b5; border-radius: 3px; background: #d9d9d9; height: 31px; margin-left: 1px; }
.spin { display: flex; flex: none; width: 82px; height: 21px; border: 1px solid #aaa; border-radius: 2px; background: #fff; font: 12px/18px "Liberation Serif", serif; }
.spin input { width: 0; flex: 1; border: 0; padding: 0 4px; background: none; }
.off { background: #efefef; color: #888; }
.steps { display: grid; width: 15px; border-left: 1px solid #b5b5b5; }
.steps button { display: grid; place-items: center; }
.steps button::before { content: ""; border: 4px solid transparent; border-top: 0; border-bottom-color: #666; }
.steps button + button::before { border-top: 4px solid #666; border-bottom: 0; }
.off .steps { opacity: .6; }
select {
  appearance: none;
  height: 21px;
  border: 1px solid #aaa;
  border-radius: 2px;
  font-family: "Liberation Serif", serif;
  background:
    linear-gradient(to bottom right, #777 50%, transparent 51%) right 6px center / 4px 4px no-repeat,
    linear-gradient(to bottom left, #777 50%, transparent 51%) right 10px center / 4px 4px no-repeat,
    #f8f8f8;
}
.unit { width: 84px; margin-left: 1px; padding: 0 4px; color: #888; opacity: 1; }
.sq { display: grid; place-items: center; width: 24px; height: 24px; font-size: 12px; font-weight: 600; }
.sc { background: #cfcfb4; color: #aeb08d; }
.adj { background: #b5afb4; color: #eceaec; }
.blank { background: #c4cdcd; }
.tm { color: #999; }
.tp { background: #88888c; color: #eee; }
.bars { background: #d0d1b8; color: #b9c085; }
.back { background: #a5a5b3; }

/* layers panel */
.work { display: flex; flex: 1; min-height: 0; }
.layers { width: 279px; flex: none; margin-right: 7px; display: flex; flex-direction: column; border-right: 1px solid #c8c8c8; }
.layers h2 { margin: 0; padding: 0 3px; font-size: 12px; font-weight: 400; line-height: 20px; }
.ltools { display: flex; gap: 10px; padding: 7px; height: 31px; }
.ltools svg { width: 16px; height: 16px; }
.tree { list-style: none; margin: 0; padding: 0; flex: 1; background: #fff; border-top: 1px solid #ddd; font-size: 12px; }
.tree li { height: 18px; padding-left: 23px; }
.tree label { display: flex; align-items: center; white-space: nowrap; }
.tree em { color: #777; }
.sel { background: #0078d7; color: #fff; }
.line { width: 17px; height: 1px; margin: 0 6px 0 5px; flex: none; }
.tan { background: #dfc56a; }
.teal { background: #3a92c8; }
.fill { width: 17px; height: 16px; margin: 0 6px 0 5px; flex: none; background: #e76f4a; border: 1px solid #b9512f; }
input[type=checkbox] { appearance: none; width: 15px; height: 15px; border: 1px solid #bbb; background: #fff; flex: none; }
input[type=checkbox]:checked { display: grid; place-items: center; }
input[type=checkbox]:checked::before { content: ""; width: 5px; height: 9px; border: solid #000; border-width: 0 2px 2px 0; transform: rotate(40deg); }
.hscroll { display: flex; height: 15px; border: 1px solid #c8c8c8; border-width: 1px 0; background: #f8f8f8; }
.hscroll button { width: 13px; display: grid; place-items: center; background: #fff; }
.hscroll button::before { content: ""; border: 4px solid transparent; }
.hscroll .left::before { border-right: 5px solid #333; border-left: 0; }
.hscroll .right::before { border-left: 5px solid #333; border-right: 0; }
.track { flex: 1; border-left: 1px solid #bbb; }
.thumb { width: 54px; background: #e3e3e3; border: 1px solid #bbb; border-width: 0 1px; }

/* map */
.canvas { flex: 1; display: flex; flex-direction: column; background: #fff; border-left: 1px solid #c8c8c8; min-width: 0; }
.message { display: flex; align-items: center; flex: none; height: 28px; padding: 2px 9px 0 75px; background: #e4f3fd; border: 1px solid #b9c8d4; border-width: 1px 0; color: #3a6c96; font: 12px/18px "Liberation Serif", serif; }
.message a { color: #4d718f; font-style: italic; text-decoration: none; margin: 0 20px 0 7px; font-size: 13px; }
.message button svg { width: 18px; height: 18px; }
.ministeps { margin-left: auto; display: grid; width: 14px; height: 22px; border-right: 1px solid #555; border-bottom: 1px solid #777; }
.ministeps i { background: radial-gradient(circle, #666 1px, transparent 1px); }
.ministeps i + i { border-top: 1px solid #777; }
.map { width: 100%; flex: 1; min-height: 0; }
#curves { fill: none; stroke: #fc9d1a; stroke-width: 1.1; }

/* status bar */
.status { display: flex; align-items: center; flex: none; height: 30px; padding: 0 6px 0 3px; border-top: 1px solid #d2d2d2; font: 11px/18px "Liberation Serif", serif; }
.status > * { flex: none; }
.locate { display: flex; align-items: center; gap: 8px; width: 202px; height: 22px; padding: 0 8px; border: 1px solid #aaa; border-radius: 3px; background: #fff; }
.locate svg { width: 13px; height: 13px; flex: none; }
.locate input { flex: 1; min-width: 0; border: 0; padding: 0; font-size: 12px; }
.locate input::placeholder { color: #888; }
.field { display: flex; align-items: center; gap: 3px; }
.coord { margin-left: auto; }
.coord input { width: 75px; height: 21px; border: 1px solid #aaa; border-radius: 2px; text-align: center; padding: 0; }
.ic svg, .epsg svg { width: 16px; height: 16px; }
.ic { margin: 0 4px; }
.scale { margin-left: 10px; }
.scale select { width: 78px; padding: 0 0 0 1px; }
.ic.lock { margin: 0 6px 0 12px; }
.status .spin { margin-left: 3px; }
.rot { margin: 0 3px 0 10px; }
.render { margin-left: 6px; gap: 4px; }
.epsg { display: flex; align-items: center; gap: 2px; margin-left: 13px; }
.ic.chat { margin: 0 0 0 23px; }

/* layer context menu */
.context {
  position: absolute;
  left: 108px;
  top: 0;
  width: 243px;
  background: #fff;
  border: 1px solid #8f8f8f;
  box-shadow: 1px 1px 0 #777;
  font-size: 12px;
  color: #111;
}
.context button, .context label { display: flex; align-items: center; width: 100%; height: 23px; text-align: left; }
.context span { padding-left: 27px; }
.context svg, .context input { flex: none; margin: 0 -2px 0 6px; width: 16px; height: 16px; }
.context svg + span, .context input + span { padding-left: 7px; }
.context input[type=checkbox] { width: 14px; height: 14px; margin-right: 0; }
.context button:disabled { color: #8c8c8c; }
.faint { opacity: .35; }
.context hr { height: 1px; margin: 1px 4px; border: 0; background: #dcdcdc; }
.context .hot { background: #0078d7; color: #fff; }
.sub::after { content: ""; margin-left: auto; margin-right: 4px; border: 4px solid transparent; border-left: 5px solid #444; border-right: 0; }
```
FILE: map.js
```js
// Travel-time curves: one parabola per event, opening upwards from its epicentre.
let seed = 20240;
function rand() {
  seed = (seed * 1664525 + 1013904223) % 4294967296;
  return seed / 4294967296;
}

const LEFT = 385, RIGHT = 1167, BASE = 675;
let d = "";

function curve(x0, y0, k) {
  if (y0 - k * (LEFT - x0) ** 2 > 638) return;
  let started = false;
  for (let x = LEFT; x < RIGHT + 8; x += 8) {
    const px = Math.min(x, RIGHT);
    const y = y0 - k * (px - x0) ** 2;
    if (y < 200) { started = false; continue; }
    d += (started ? "L" : "M") + px + " " + y.toFixed(1);
    started = true;
  }
}

// Shallow events sit on a regular station spacing along the baseline.
for (let i = 0; i < 12; i++) {
  for (const lift of [0, 4, 17, 36]) curve(660 + i * 81, BASE - lift, 0.0005);
}
// Steep arrivals from distant shallow events.
for (let i = 0; i < 170; i++) {
  curve(800 + rand() * 560, BASE - 16 - rand() * 200, 0.0006 + rand() * 0.0007);
}
// Deeper events fill the upper part of the section.
for (let i = 0; i < 330; i++) {
  curve(460 + rand() * 860, BASE - 45 - 395 * rand(), 0.0004 + rand() * 0.0006);
}
document.getElementById("curves").setAttribute("d", d);
```
